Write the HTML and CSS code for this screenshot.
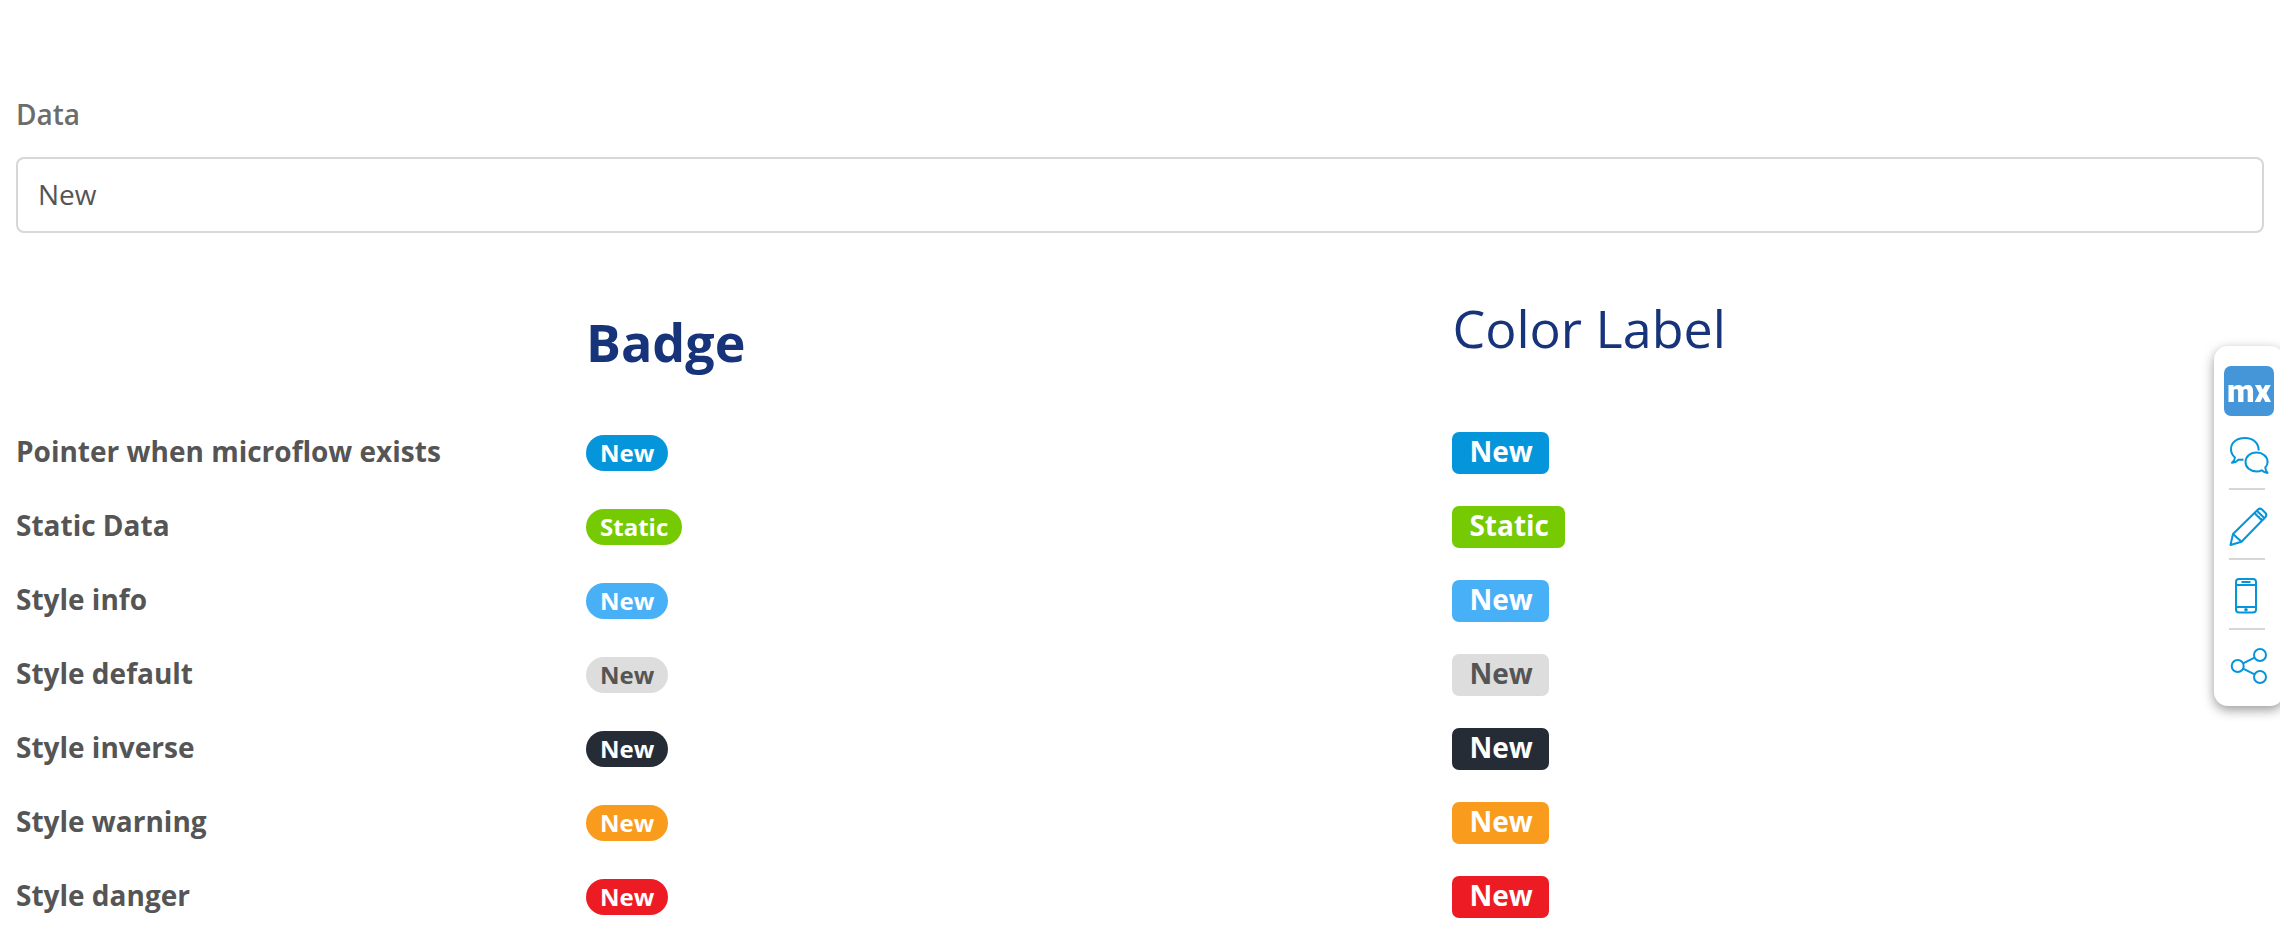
FILE: index.html
```html
<!DOCTYPE html>
<html lang="en">
<head>
<meta charset="utf-8">
<title>Badge</title>
<link rel="stylesheet" href="styles.css">
</head>
<body>
<main class="page">
  <div class="form-group">
    <label class="form-label" for="data">Data</label>
    <input class="form-control" id="data" type="text" value="New">
  </div>
  <table class="samples">
    <colgroup><col class="col-name"><col class="col-badge"><col class="col-label"></colgroup>
    <thead>
      <tr><td></td><th class="head head-badge" scope="col">Badge</th><th class="head head-label" scope="col">Color Label</th></tr>
    </thead>
    <tbody>
      <tr><th scope="row">Pointer when microflow exists</th><td><span class="badge primary">New</span></td><td><span class="label primary">New</span></td></tr>
      <tr><th scope="row">Static Data</th><td><span class="badge success">Static</span></td><td><span class="label success">Static</span></td></tr>
      <tr><th scope="row">Style info</th><td><span class="badge info">New</span></td><td><span class="label info">New</span></td></tr>
      <tr><th scope="row">Style default</th><td><span class="badge default">New</span></td><td><span class="label default">New</span></td></tr>
      <tr><th scope="row">Style inverse</th><td><span class="badge inverse">New</span></td><td><span class="label inverse">New</span></td></tr>
      <tr><th scope="row">Style warning</th><td><span class="badge warning">New</span></td><td><span class="label warning">New</span></td></tr>
      <tr><th scope="row">Style danger</th><td><span class="badge danger">New</span></td><td><span class="label danger">New</span></td></tr>
    </tbody>
  </table>
</main>
<aside class="toolbar">
  <button class="logo" type="button">mx</button>
  <button class="tool" type="button" aria-label="Feedback">
    <svg viewBox="0 0 50 68"><path d="M34.6 30.5C35 23 29 18 21 18C13 18 7 22.500 7 29C7 32.500 8.500 35.500 11 37.500C10.800 39.700 9.500 41.500 8 42.800C10.500 42.500 13 41.500 14.500 39.600C16 40 17.500 40 19.500 39.500"/><path d="M41.300 47.500C42.800 46 43.600 44 43.600 42C43.600 36.500 38.700 32.500 32.500 32.500C26.300 32.500 21.500 36.500 21.500 42C21.500 47.500 26.300 51.500 32.500 51.500C34.400 51.500 36.200 51.100 37.700 50.300C39.300 51.800 41.300 52.800 43.500 53C42.200 51.500 41.400 49.600 41.300 47.500Z"/></svg>
  </button>
  <hr class="rule">
  <button class="tool" type="button" aria-label="Edit">
    <svg viewBox="0 0 50 68"><path d="M6.500 55L9 44L34 19.500Q36 17.800 38 19.500L41.500 23Q43.200 25 41.500 27L17.500 51.800Z"/><path d="M9 44L17.500 51.800M30.500 23L38.200 30.700M33 20.700L40.500 28.300" /><path class="fine" d="M33.500 23.500L31.800 25.200M35.800 25.800L34.100 27.500M38 28L36.300 29.700"/></svg>
  </button>
  <hr class="rule">
  <button class="tool" type="button" aria-label="Device view">
    <svg viewBox="0 0 50 68"><rect x="12" y="19" width="20" height="33.500" rx="3"/><path d="M12 25H32M12 47H32M17.500 22H26.500"/><circle class="dot" cx="22" cy="49.700" r="1.800"/></svg>
  </button>
  <hr class="rule">
  <button class="tool" type="button" aria-label="Share">
    <svg viewBox="0 0 50 68"><circle cx="13.700" cy="36" r="6"/><circle cx="36" cy="25" r="6"/><circle cx="36" cy="47" r="6"/><path d="M19.100 33.300L30.600 27.700M19.100 38.700L30.600 44.300"/></svg>
  </button>
</aside>
</body>
</html>
```
FILE: styles.css
```css
* {
  box-sizing: border-box;
}

body {
  margin: 0;
  background: #fff;
  color: #555;
  font-family: "Open Sans", sans-serif;
  font-size: 28px;
  line-height: 42px;
  overflow-x: hidden;
}

.form-group {
  padding: 93px 16px 0;
}

.form-label {
  display: block;
  margin-bottom: 22px;
  color: #6c6c6c;
  font-weight: 600;
}

.form-control {
  display: block;
  width: 100%;
  height: 76px;
  padding: 0 20px 2px;
  border: 2px solid #d7d7d7;
  border-radius: 8px;
  background: #fff;
  color: #555;
  font: inherit;
}

.samples {
  width: 100%;
  margin-top: 48px;
  border-collapse: collapse;
  table-layout: fixed;
}

.col-name {
  width: 25%;
}

.col-badge {
  width: 38%;
}

.col-label {
  width: 37%;
}

.samples th,
.samples td {
  padding: 15px 16px;
  text-align: left;
  vertical-align: baseline;
}

.samples .head {
  color: #17347b;
  font-size: 52px;
  line-height: 60px;
  vertical-align: top;
}

.samples .head-badge {
  padding-top: 31px;
  padding-bottom: 43px;
}

.samples .head-label {
  padding-top: 17px;
  font-weight: 400;
}

.badge,
.label {
  display: inline-block;
  color: #fff;
  font-weight: 700;
}

.badge {
  padding: 6px 14px;
  border-radius: 18px;
  font-size: 24px;
  line-height: 24px;
}

.label {
  padding: 5px 16px 9px 17px;
  border-radius: 7px;
  line-height: 28px;
}

.primary { background: #0595db; }
.success { background: #76ca02; }
.info { background: #48b0f7; }
.default { background: #ddd; color: #555; }
.inverse { background: #252c36; }
.warning { background: #f99b1d; }
.danger { background: #ed1c24; }

.toolbar {
  position: fixed;
  top: 346px;
  right: -4px;
  display: flex;
  flex-direction: column;
  padding: 20px 10px 8px;
  border-radius: 14px;
  background: #fff;
  box-shadow: 0 4px 12px rgba(0, 0, 0, 0.4);
}

.logo,
.tool {
  width: 50px;
  padding: 0;
  border: 0;
  cursor: pointer;
}

.logo {
  height: 50px;
  margin-bottom: 4px;
  border-radius: 7px;
  background: #4595d9;
  color: #fff;
  font: 900 32px/44px Roboto, sans-serif;
}

.tool {
  height: 68px;
  background: none;
}

.tool svg {
  display: block;
  width: 50px;
  height: 68px;
  fill: none;
  stroke: #0595db;
  stroke-width: 2;
  stroke-linejoin: round;
}

.tool .fine {
  stroke-width: 1;
}

.tool .dot {
  fill: #0595db;
  stroke: none;
}

.rule {
  width: 36px;
  height: 2px;
  margin: 0 0 0 5px;
  border: 0;
  background: #d7d7d7;
}
```
